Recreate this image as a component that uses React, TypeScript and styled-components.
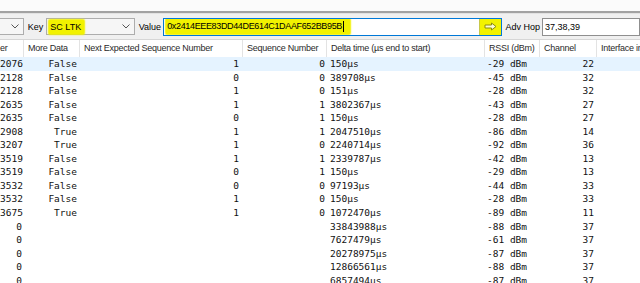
import React from 'react'
import styled, { createGlobalStyle } from 'styled-components'

const uiFont = `'Liberation Sans', Arial, sans-serif`
const monoFont = `'DejaVu Sans Mono', 'Liberation Mono', monospace`
const marker = '#f2f200'

const GlobalStyle = createGlobalStyle`
  html, body {
    margin: 0;
    padding: 0;
    background: #fff;
    overflow: hidden;
  }
`

const Window = styled.div`
  width: 640px;
  height: 283px;
  overflow: hidden;
  display: flex;
  flex-direction: column;
  background: #fff;
`

const TopStrip = styled.div`
  flex: none;
  height: 11px;
  background: #fbfbfb;
  border-bottom: 2px solid #a2a2a2;
`

const Toolbar = styled.div`
  flex: none;
  box-sizing: border-box;
  height: 27px;
  display: flex;
  align-items: center;
  background: #f0f0f0;
  border-top: 1px solid #e2e2e2;
  border-bottom: 1px solid #d6d6d6;
  font-family: ${uiFont};
  font-size: 9px;
  color: #000;
`

const Combo = styled.div<{ $w: number; $ml?: number }>`
  box-sizing: border-box;
  width: ${({ $w }) => $w}px;
  margin-left: ${({ $ml }) => $ml || 0}px;
  height: 17px;
  display: flex;
  align-items: center;
  justify-content: space-between;
  padding: 0 4px 0 2px;
  background: #f6f6f6;
  border: 1px solid #adadad;
`

const Label = styled.span<{ $w: number }>`
  box-sizing: border-box;
  width: ${({ $w }) => $w}px;
  padding-left: 4px;
  white-space: nowrap;
`

const Marked = styled.span`
  background: ${marker};
  box-shadow: 0 0 1.5px 1px ${marker};
  border-radius: 1px;
  padding: 2px 3px 2px 1px;
  white-space: nowrap;
`

const TextBox = styled.div<{ $w: number; $focus?: boolean }>`
  box-sizing: border-box;
  width: ${({ $w }) => $w}px;
  height: 18px;
  display: flex;
  align-items: center;
  padding-left: 2px;
  background: #fff;
  border: 1px solid ${({ $focus }) => ($focus ? '#0078d7' : '#8f8f8f')};
  white-space: nowrap;
  overflow: hidden;
`

const HexText = styled(Marked)`
  letter-spacing: -0.35px;
  padding-right: 6px;
`

const Caret = styled.span`
  display: inline-block;
  width: 1px;
  height: 11px;
  margin-left: 1px;
  background: #000;
  vertical-align: middle;
`

const Spacer = styled.div`
  flex: 1;
`

const GoButton = styled.div`
  width: 21px;
  height: 16px;
  display: flex;
  align-items: center;
  justify-content: center;
  background: ${marker};
  border-left: 1px solid #c8c84a;
`

const Table = styled.div`
  flex: 1;
  display: flex;
  flex-direction: column;
  overflow: hidden;
`

const cols = [
  { w: 24, align: 'right', pad: 2 },
  { w: 56, align: 'right', pad: 3 },
  { w: 163, align: 'right', pad: 4 },
  { w: 84, align: 'right', pad: 2 },
  { w: 158, align: 'left', pad: 3 },
  { w: 55, align: 'left', pad: 2 },
  { w: 57, align: 'right', pad: 3 },
  { w: 60, align: 'left', pad: 3 },
] as const

const template = cols.map((c) => `${c.w}px`).join(' ')

const HeaderRow = styled.div`
  flex: none;
  display: grid;
  grid-template-columns: ${template};
  height: 17px;
  background: #fff;
`

const HeaderCell = styled.div`
  border-right: 1px solid #e3e3e3;
  padding-left: 4px;
  font-family: ${uiFont};
  font-size: 9px;
  letter-spacing: -0.25px;
  line-height: 17px;
  color: #2a2a2a;
  white-space: nowrap;
  overflow: hidden;
`

const FirstHeader = styled(HeaderCell)`
  padding-left: 0;
`

const Row = styled.div<{ $selected?: boolean }>`
  flex: none;
  display: grid;
  grid-template-columns: ${template};
  height: 13.56px;
  background: ${({ $selected }) => ($selected ? '#e5f3ff' : 'transparent')};
`

const Cell = styled.div<{ $align: string; $pad: number }>`
  font-family: ${monoFont};
  font-size: 9.5px;
  line-height: 13.56px;
  color: #111;
  white-space: nowrap;
  overflow: hidden;
  text-align: ${({ $align }) => $align};
  ${({ $align, $pad }) => ($align === 'right' ? `padding-right: ${$pad}px;` : `padding-left: ${$pad}px;`)}
`

const headers = [
  'More Data',
  'Next Expected Sequence Number',
  'Sequence Number',
  'Delta time (µs end to start)',
  'RSSI (dBm)',
  'Channel',
  'Interface index',
]

type Packet = [string, string, string, string, string, string, string]

const rows: Packet[] = [
  ['2076', 'False', '1', '0', '150µs', '-29 dBm', '22'],
  ['2128', 'False', '0', '0', '389708µs', '-45 dBm', '32'],
  ['2128', 'False', '1', '0', '151µs', '-28 dBm', '32'],
  ['2635', 'False', '1', '1', '3802367µs', '-43 dBm', '27'],
  ['2635', 'False', '0', '1', '150µs', '-28 dBm', '27'],
  ['2908', 'True', '1', '1', '2047510µs', '-86 dBm', '14'],
  ['3207', 'True', '1', '0', '2240714µs', '-92 dBm', '36'],
  ['3519', 'False', '1', '1', '2339787µs', '-42 dBm', '13'],
  ['3519', 'False', '0', '1', '150µs', '-29 dBm', '13'],
  ['3532', 'False', '0', '0', '97193µs', '-44 dBm', '33'],
  ['3532', 'False', '1', '0', '150µs', '-28 dBm', '33'],
  ['3675', 'True', '1', '0', '1072470µs', '-89 dBm', '11'],
  ['0', '', '', '', '33843988µs', '-88 dBm', '37'],
  ['0', '', '', '', '7627479µs', '-61 dBm', '37'],
  ['0', '', '', '', '20278975µs', '-87 dBm', '37'],
  ['0', '', '', '', '12866561µs', '-88 dBm', '37'],
  ['0', '', '', '', '6857494µs', '-87 dBm', '37'],
]

const Chevron = () => (
  <svg width="8" height="5" viewBox="0 0 8 5">
    <polyline points="0.5,0.5 4,4 7.5,0.5" fill="none" stroke="#555" strokeWidth="1" />
  </svg>
)

const GoArrow = () => (
  <svg width="13" height="9" viewBox="0 0 13 9">
    <path d="M1 3h6.5V1L12 4.5 7.5 8V6H1z" fill="#fbfbd0" stroke="#8a8a10" strokeWidth="1" />
  </svg>
)

const App: React.FC = () => (
  <>
    <GlobalStyle />
    <Window>
      <TopStrip />
      <Toolbar>
        <Combo $w={25} $ml={-1}>
          <span />
          <Chevron />
        </Combo>
        <Label $w={23}>Key</Label>
        <Combo $w={90}>
          <Marked>SC LTK</Marked>
          <Chevron />
        </Combo>
        <Label $w={29}>Value</Label>
        <TextBox $w={345} $focus>
          <HexText>
            0x2414EEE83DD44DE614C1DAAF652BB95B
            <Caret />
          </HexText>
          <Spacer />
          <GoButton>
            <GoArrow />
          </GoButton>
        </TextBox>
        <Label $w={41}>Adv Hop</Label>
        <TextBox $w={100}>37,38,39</TextBox>
      </Toolbar>
      <Table>
        <HeaderRow>
          <FirstHeader>er</FirstHeader>
          {headers.map((h) => (
            <HeaderCell key={h}>{h}</HeaderCell>
          ))}
        </HeaderRow>
        {rows.map((r, i) => (
          <Row key={i} $selected={i === 0}>
            {r.map((v, j) => (
              <Cell key={j} $align={cols[j].align} $pad={cols[j].pad}>
                {v}
              </Cell>
            ))}
            <Cell $align="left" $pad={0} />
          </Row>
        ))}
      </Table>
    </Window>
  </>
)

export default App
